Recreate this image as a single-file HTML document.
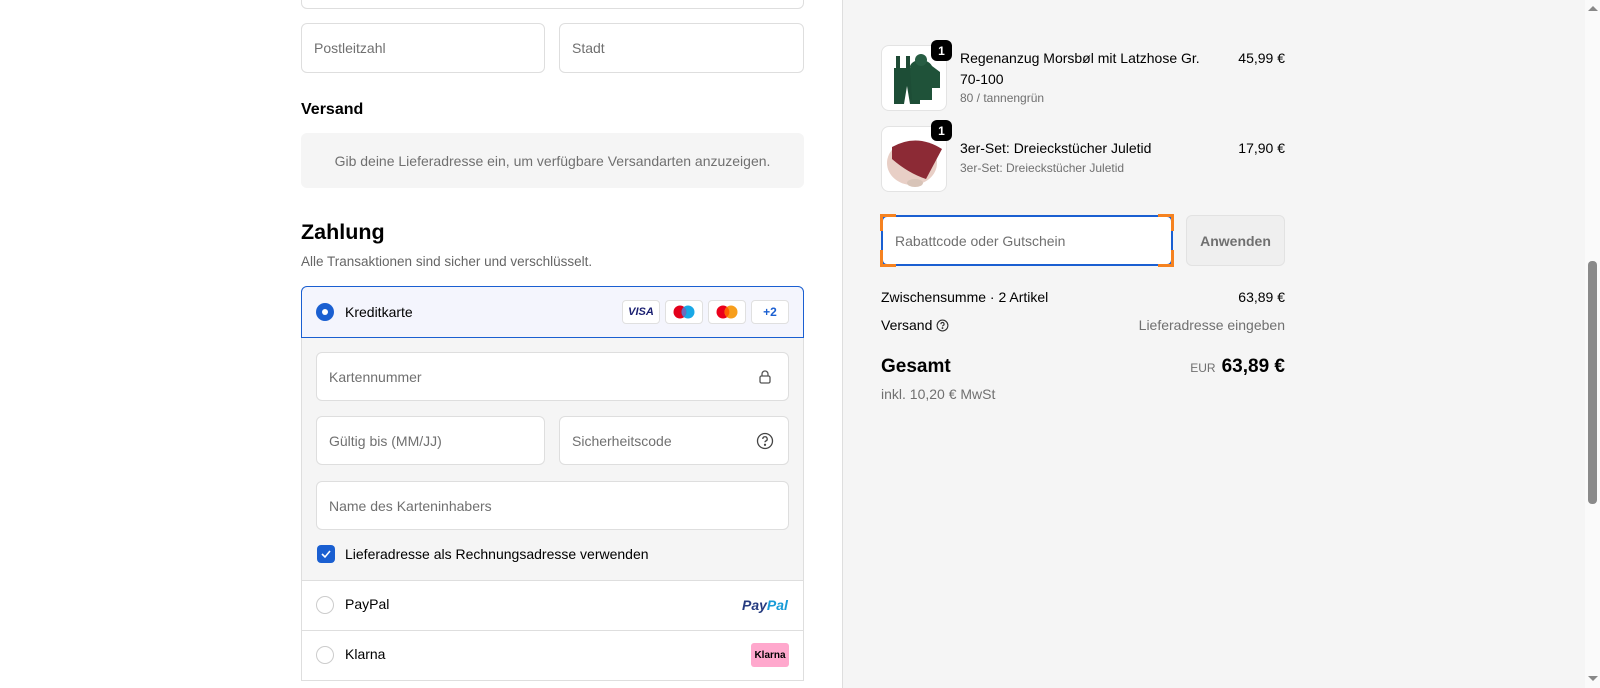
<!DOCTYPE html>
<html><head><meta charset="utf-8"><style>
*{box-sizing:border-box;margin:0;padding:0}
body{width:1600px;height:688px;overflow:hidden;font-family:"Liberation Sans",Arial,sans-serif;color:#000;background:#fff;position:relative;font-size:14px}
.abs{position:absolute}
.inp{position:absolute;border:1px solid #dedede;border-radius:6px;background:#fff;color:#707070;font-size:14px;padding-left:12px;display:flex;align-items:center}
.right{position:absolute;left:842px;top:0;width:743px;height:688px;background:#f5f5f5;border-left:1px solid #dedede}
.sb{position:absolute;left:1585px;top:0;width:15px;height:688px;background:#fafafa}
.thumb{position:absolute;left:1588px;top:261px;width:9px;height:243px;background:#8a8a8a;border-radius:4px}
.radio{position:absolute;width:18px;height:18px;border-radius:50%;border:1px solid #ccc;background:#fff}
.badge{position:absolute;width:21px;height:21px;border-radius:6px;background:#000;color:#fff;font-size:12px;font-weight:bold;display:flex;align-items:center;justify-content:center}
.thumbimg{position:absolute;width:66px;height:66px;border-radius:8px;background:#fff;border:1px solid #e3e3e3;overflow:hidden}
.card{position:absolute;top:300px;width:38px;height:24px;background:#fff;border:1px solid #e0e0e0;border-radius:4px;display:flex;align-items:center;justify-content:center}
.oc{position:absolute;width:16px;height:17px;border-color:#f58220;border-style:solid;border-width:0}
</style></head><body>
<div class="inp" style="left:301px;top:-40px;width:503px;height:49px"></div>
<div class="inp" style="left:301px;top:23px;width:244px;height:50px">Postleitzahl</div>
<div class="inp" style="left:559px;top:23px;width:245px;height:50px">Stadt</div>
<div class="abs" style="left:301px;top:101px;font-size:16px;font-weight:bold">Versand</div>
<div class="abs" style="left:301px;top:133px;width:503px;height:55px;background:#f5f5f5;border-radius:6px;color:#707070;font-size:14px;display:flex;align-items:center;justify-content:center">Gib deine Lieferadresse ein, um verfügbare Versandarten anzuzeigen.</div>
<div class="abs" style="left:301px;top:220px;font-size:21.5px;font-weight:bold">Zahlung</div>
<div class="abs" style="left:301px;top:254px;font-size:13.5px;color:#666">Alle Transaktionen sind sicher und verschlüsselt.</div>

<div class="abs" style="left:301px;top:286px;width:503px;height:395px;border:1px solid #dedede;border-radius:6px 6px 0 0"></div>
<div class="abs" style="left:301px;top:286px;width:503px;height:52px;background:#f4f5fd;border:1px solid #1a5fd1;border-radius:6px 6px 0 0"></div>
<div class="abs" style="left:316px;top:303px;width:18px;height:18px;border-radius:50%;background:#1a5fd1"><div style="position:absolute;left:6px;top:6px;width:6px;height:6px;border-radius:50%;background:#fff"></div></div>
<div class="abs" style="left:345px;top:304px;font-size:14px">Kreditkarte</div>
<div class="card" style="left:622px"><span style="font-style:italic;font-weight:900;font-size:11px;color:#1a1f71">VISA</span></div>
<div class="card" style="left:665px"><svg width="26" height="16"><circle cx="9" cy="8" r="6.5" fill="#e3001b"/><circle cx="17" cy="8" r="6.5" fill="#009ee3" opacity=".9"/><path d="M13 3a6.5 6.5 0 0 1 0 10a6.5 6.5 0 0 1 0-10z" fill="#6c6bbd"/></svg></div>
<div class="card" style="left:708px"><svg width="26" height="16"><circle cx="9" cy="8" r="6.5" fill="#eb001b"/><circle cx="17" cy="8" r="6.5" fill="#f79e1b"/><path d="M13 3a6.5 6.5 0 0 1 0 10a6.5 6.5 0 0 1 0-10z" fill="#ff5f00"/></svg></div>
<div class="card" style="left:751px;color:#1a5fd1;font-weight:bold;font-size:12px">+2</div>

<div class="abs" style="left:302px;top:338px;width:501px;height:242px;background:#f5f5f5"></div>
<div class="inp" style="left:316px;top:352px;width:473px;height:49px">Kartennummer</div>
<svg class="abs" style="left:757px;top:369px" width="16" height="16" viewBox="0 0 16 16" fill="none" stroke="#555" stroke-width="1.3"><rect x="3" y="7" width="10" height="7" rx="1.5"/><path d="M5 7V5a3 3 0 0 1 6 0v2"/></svg>
<div class="inp" style="left:316px;top:416px;width:229px;height:49px">Gültig bis (MM/JJ)</div>
<div class="inp" style="left:559px;top:416px;width:230px;height:49px">Sicherheitscode</div>
<svg class="abs" style="left:756px;top:432px" width="18" height="18" viewBox="0 0 18 18" fill="none" stroke="#444" stroke-width="1.3"><circle cx="9" cy="9" r="7.5"/><path d="M6.8 7a2.2 2.2 0 1 1 3 2c-.6.3-.8.7-.8 1.3"/><circle cx="9" cy="12.8" r=".5" fill="#444"/></svg>
<div class="inp" style="left:316px;top:481px;width:473px;height:49px">Name des Karteninhabers</div>
<div class="abs" style="left:317px;top:545px;width:18px;height:18px;border-radius:4px;background:#1a5fd1"><svg width="18" height="18"><path d="M5 9l3 3 5-6" stroke="#fff" stroke-width="1.6" fill="none"/></svg></div>
<div class="abs" style="left:345px;top:546px;font-size:14px">Lieferadresse als Rechnungsadresse verwenden</div>

<div class="abs" style="left:302px;top:580px;width:501px;border-top:1px solid #dedede"></div>
<div class="radio" style="left:316px;top:596px"></div>
<div class="abs" style="left:345px;top:596px;font-size:14px">PayPal</div>
<div class="abs" style="left:742px;top:597px;font-style:italic;font-weight:900;font-size:14px"><span style="color:#253b80">Pay</span><span style="color:#179bd7">Pal</span></div>
<div class="abs" style="left:302px;top:630px;width:501px;border-top:1px solid #dedede"></div>
<div class="radio" style="left:316px;top:646px"></div>
<div class="abs" style="left:345px;top:646px;font-size:14px">Klarna</div>
<div class="abs" style="left:751px;top:643px;width:38px;height:24px;background:#ffa8cd;border-radius:3px;font-size:10px;font-weight:bold;display:flex;align-items:center;justify-content:center">Klarna</div>
<div class="abs" style="left:302px;top:680px;width:501px;border-top:1px solid #dedede"></div>

<div class="right"></div>
<div class="thumbimg" style="left:881px;top:45px"><svg width="66" height="66"><path d="M14 10h4v14h-4zM24 10h4v14h-4z" fill="#1e4a35"/><path d="M12 22h26v36h-10l-3-18-3 18H12z" fill="#1d4d36"/><path d="M28 20c3-8 18-8 22 0l8 6v16h-8v12H30z" fill="#1f5239"/><circle cx="39" cy="14" r="6" fill="#275d43"/></svg></div>
<div class="badge" style="left:931px;top:40px">1</div>
<div class="abs" style="left:960px;top:48px;width:250px;font-size:14px;line-height:21px">Regenanzug Morsbøl mit Latzhose Gr. 70-100</div>
<div class="abs" style="left:960px;top:91px;font-size:12px;color:#707070">80 / tannengrün</div>
<div class="abs" style="left:1200px;top:50px;width:85px;text-align:right;font-size:14px">45,99 €</div>

<div class="thumbimg" style="left:881px;top:126px"><svg width="66" height="66"><ellipse cx="30" cy="36" rx="25" ry="22" fill="#e8cfc6"/><path d="M10 20q25-14 50 2l-16 30q-18-6-34-20z" fill="#8c2a35"/><ellipse cx="33" cy="56" rx="8" ry="4" fill="#d8c4b8"/></svg></div>
<div class="badge" style="left:931px;top:120px">1</div>
<div class="abs" style="left:960px;top:140px;font-size:14px">3er-Set: Dreieckstücher Juletid</div>
<div class="abs" style="left:960px;top:161px;font-size:12px;color:#707070">3er-Set: Dreieckstücher Juletid</div>
<div class="abs" style="left:1200px;top:140px;width:85px;text-align:right;font-size:14px">17,90 €</div>

<div class="inp" style="left:881px;top:215px;width:292px;height:51px;border:2px solid #1a5fd1;border-radius:6px;color:#707070">Rabattcode oder Gutschein</div>
<div class="oc" style="left:880px;top:214px;border-top-width:3px;border-left-width:3px"></div>
<div class="oc" style="left:1158px;top:214px;border-top-width:3px;border-right-width:3px"></div>
<div class="oc" style="left:880px;top:250px;border-bottom-width:3px;border-left-width:3px"></div>
<div class="oc" style="left:1158px;top:250px;border-bottom-width:3px;border-right-width:3px"></div>
<div class="abs" style="left:1186px;top:215px;width:99px;height:51px;border:1px solid #e2e2e2;border-radius:6px;background:#efefef;color:#707070;font-weight:bold;font-size:14px;display:flex;align-items:center;justify-content:center">Anwenden</div>

<div class="abs" style="left:881px;top:289px;font-size:14px">Zwischensumme · 2 Artikel</div>
<div class="abs" style="left:1150px;top:289px;width:135px;text-align:right;font-size:14px">63,89 €</div>
<div class="abs" style="left:881px;top:317px;font-size:14px">Versand <svg width="13" height="13" viewBox="0 0 14 14" style="vertical-align:-2px" fill="none" stroke="#333" stroke-width="1.2"><circle cx="7" cy="7" r="5.8"/><path d="M5.3 5.5a1.7 1.7 0 1 1 2.3 1.5c-.4.2-.6.5-.6 1"/><circle cx="7" cy="9.8" r=".4" fill="#333"/></svg></div>
<div class="abs" style="left:1050px;top:317px;width:235px;text-align:right;font-size:14px;color:#707070">Lieferadresse eingeben</div>
<div class="abs" style="left:881px;top:356px;font-size:19px;font-weight:bold">Gesamt</div>
<div class="abs" style="left:1100px;top:356px;width:185px;text-align:right"><span style="font-size:12px;color:#707070;margin-right:6px">EUR</span><span style="font-size:19px;font-weight:bold">63,89 €</span></div>
<div class="abs" style="left:881px;top:386px;font-size:14px;color:#707070">inkl. 10,20 € MwSt</div>

<div class="sb"></div>
<div class="thumb"></div>
<div class="abs" style="left:1588px;top:6px;width:0;height:0;border-left:5px solid transparent;border-right:5px solid transparent;border-bottom:5px solid #888"></div>
<div class="abs" style="left:1588px;top:676px;width:0;height:0;border-left:5px solid transparent;border-right:5px solid transparent;border-top:5px solid #888"></div>
</body></html>
